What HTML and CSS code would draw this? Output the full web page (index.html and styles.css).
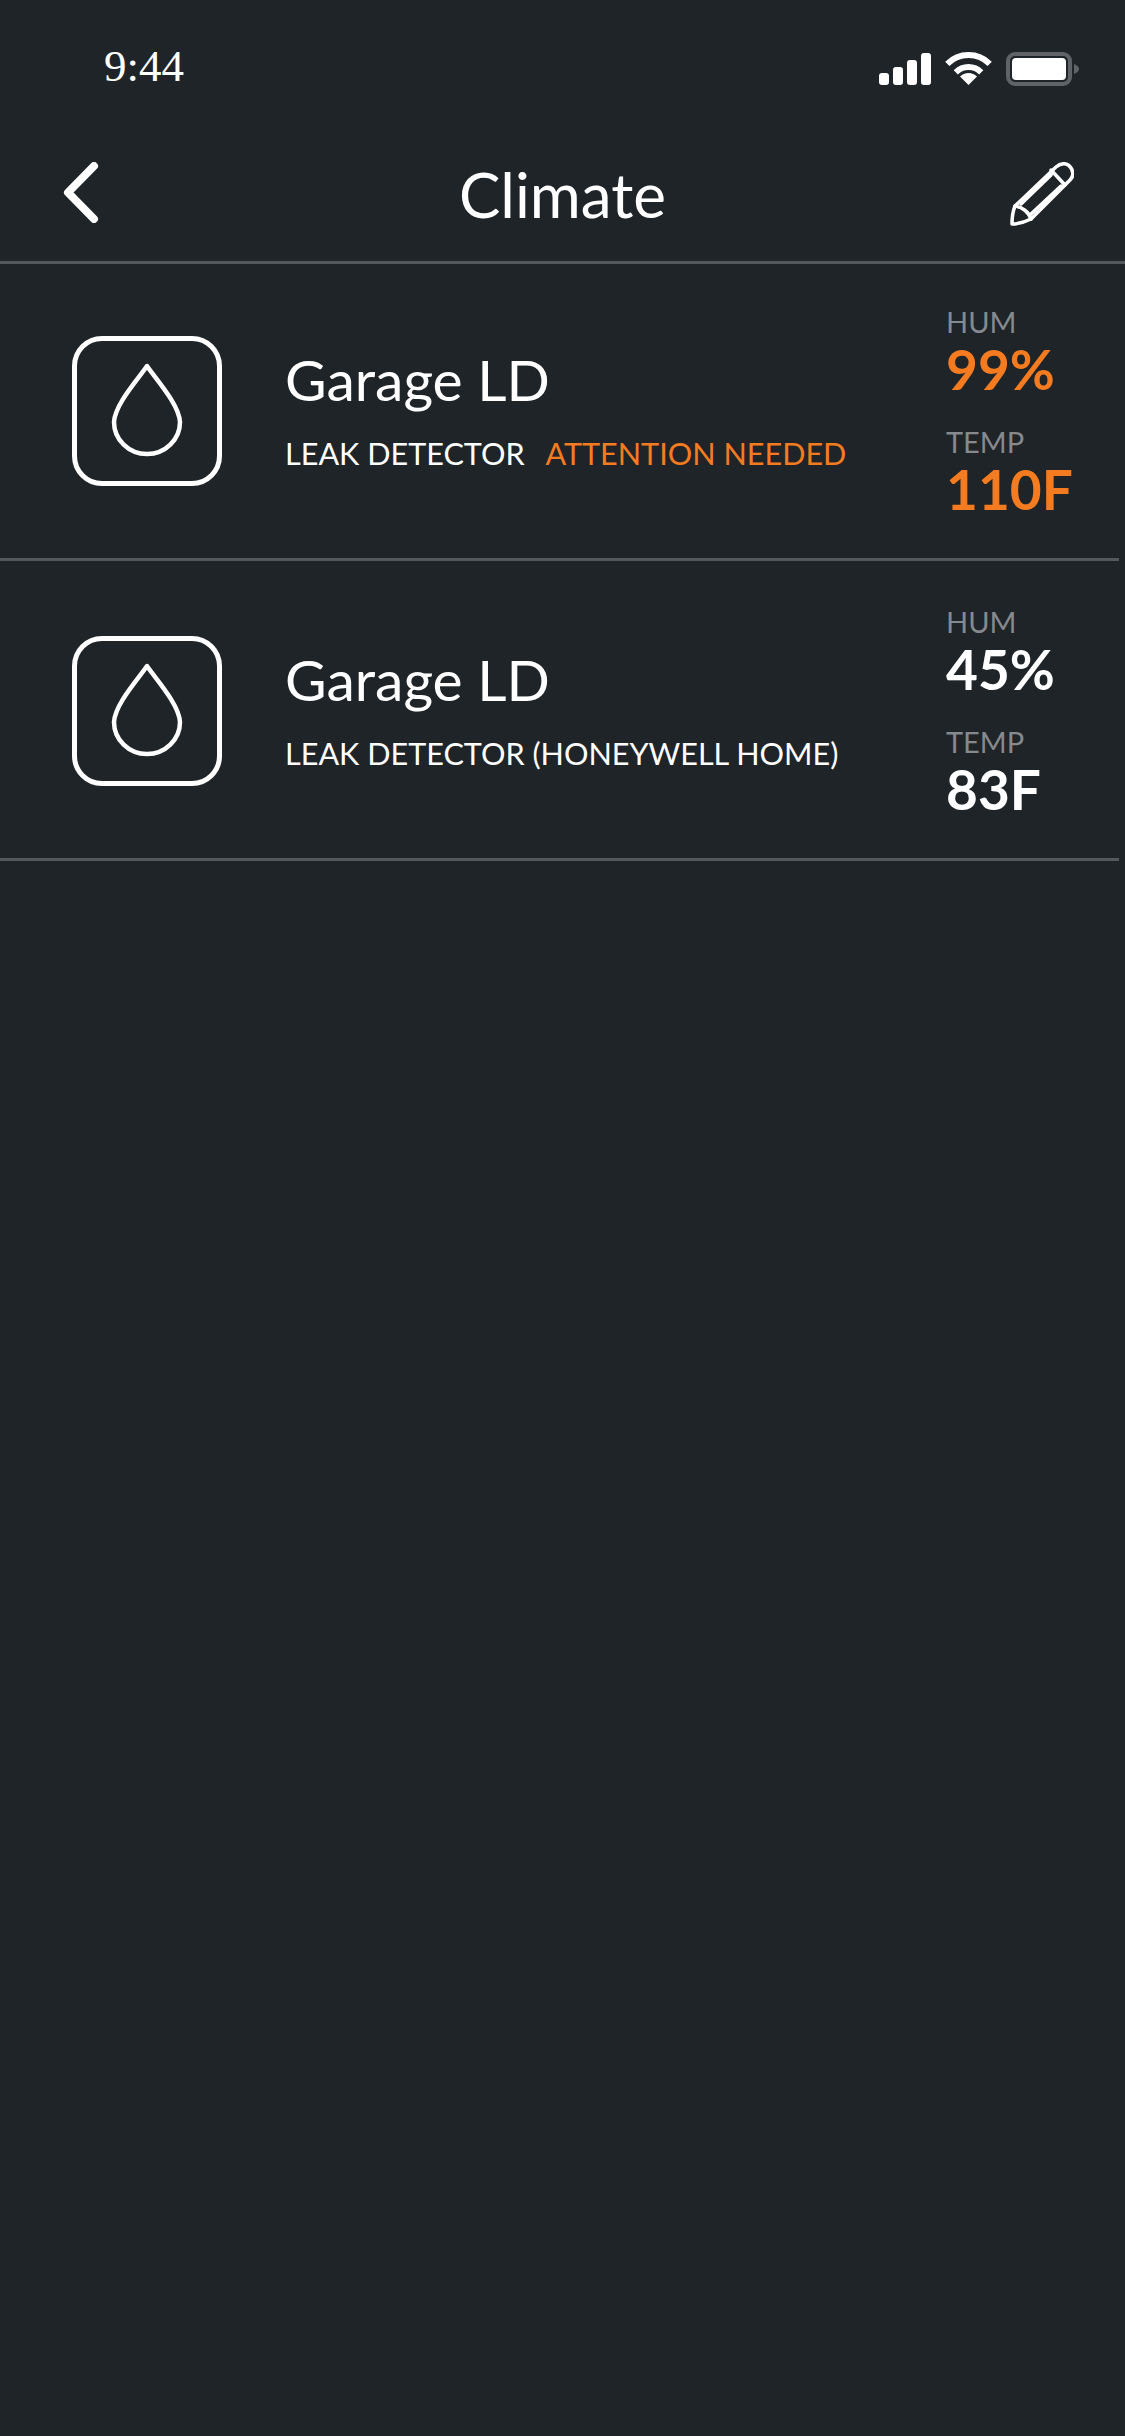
FILE: index.html
```html
<!DOCTYPE html>
<html lang="en">
<head>
    <meta charset="UTF-8">
    <meta name="viewport" content="width=device-width, initial-scale=1.0">
    <title>Climate</title>
    <link rel="stylesheet" href="styles.css">
</head>
<body>
<div class="status-bar">
    <span class="clock">9:44</span>
    <div class="status-icons">
        <svg class="signal" width="52" height="32" viewBox="0 0 52 32" fill="#fff">
            <rect x="0" y="20" width="10" height="12" rx="3"/>
            <rect x="14" y="14" width="10" height="18" rx="3"/>
            <rect x="28" y="7" width="10" height="25" rx="3"/>
            <rect x="42" y="0" width="10" height="32" rx="3"/>
        </svg>
        <svg class="wifi" width="47" height="33" viewBox="0 0 47 33" fill="none" stroke="#fff" stroke-width="6">
            <path d="M2.3 11.8A30 30 0 0 1 44.7 11.8"/>
            <path d="M10.8 20.3A18 18 0 0 1 36.2 20.3"/>
            <path d="M23.5 33L15 24.5A12 12 0 0 1 32 24.5Z" fill="#fff" stroke="none"/>
        </svg>
        <svg class="battery" width="73" height="34" viewBox="0 0 73 34">
            <rect x="2" y="2" width="62" height="30" rx="7" fill="none" stroke="#5f6367" stroke-width="4"/>
            <rect x="6" y="6" width="54" height="22" rx="4" fill="#fff"/>
            <path d="M68 12C71 13 73 15 73 17C73 19 71 21 68 22Z" fill="#5f6367"/>
        </svg>
    </div>
</div>

<header class="nav">
    <svg class="back" width="36" height="61" viewBox="0 0 36 61" fill="none" stroke="#fff" stroke-width="8" stroke-linecap="round" stroke-linejoin="round">
        <path d="M31 4L5 30.500L31 57"/>
    </svg>
    <h1 class="nav-title">Climate</h1>
    <svg class="edit" width="64" height="64" viewBox="0 0 64 64" fill="none" stroke="#fff" stroke-width="3.500" stroke-linejoin="round" stroke-linecap="round">
        <path d="M5 44L46 5C52 0 58 1 61 6C64 11 63 15 60 18L21 57C15 60 8 62 2 62C2 55 3 49 5 44Z"/>
        <path d="M5 44C12 45 19 50 21 57"/>
        <path d="M11 42L41 13M21 52L51 24M41 8L55 23"/>
    </svg>
</header>

<main class="device-list">
    <div class="device-row">
        <div class="device-icon">
            <svg class="drop" width="72" height="94" viewBox="0 0 72 94" fill="none" stroke="#fff" stroke-width="4.500" stroke-linejoin="round">
                <path d="M36 3C28 15 4 41 3 59A33 32 0 0 0 69 59C68 41 44 15 36 3Z"/>
            </svg>
        </div>
        <div class="device-info">
            <div class="device-name">Garage LD</div>
            <div class="device-type">LEAK DETECTOR <span class="alert">ATTENTION NEEDED</span></div>
        </div>
        <div class="readings">
            <div class="reading-label">HUM</div>
            <div class="reading-value alert">99%</div>
            <div class="reading-label temp">TEMP</div>
            <div class="reading-value alert">110F</div>
        </div>
    </div>
    <div class="device-row">
        <div class="device-icon">
            <svg class="drop" width="72" height="94" viewBox="0 0 72 94" fill="none" stroke="#fff" stroke-width="4.500" stroke-linejoin="round">
                <path d="M36 3C28 15 4 41 3 59A33 32 0 0 0 69 59C68 41 44 15 36 3Z"/>
            </svg>
        </div>
        <div class="device-info">
            <div class="device-name">Garage LD</div>
            <div class="device-type">LEAK DETECTOR (HONEYWELL HOME)</div>
        </div>
        <div class="readings">
            <div class="reading-label">HUM</div>
            <div class="reading-value">45%</div>
            <div class="reading-label temp">TEMP</div>
            <div class="reading-value">83F</div>
        </div>
    </div>
</main>
</body>
</html>
```
FILE: styles.css
```css
html, body {
    margin: 0;
    padding: 0;
}
body {
    width: 1125px;
    min-height: 2436px;
    background-color: #1f2428;
    color: #fff;
    font-family: Lato, "Open Sans", sans-serif;
}
.status-bar {
    height: 130px;
    box-sizing: border-box;
    padding: 49px 46px 0 104px;
    display: flex;
    justify-content: space-between;
    align-items: flex-start;
}
.clock {
    font-family: "Liberation Serif", serif;
    font-size: 45px;
    line-height: 34px;
}
.status-icons {
    margin-top: 3px;
    display: flex;
    align-items: flex-start;
    gap: 14px;
}
.signal {
    margin-top: 1px;
}
.nav {
    height: 134px;
    box-sizing: border-box;
    padding-top: 32px;
    border-bottom: 3px solid #54575b;
    display: grid;
    grid-template-columns: 1fr auto 1fr;
    align-items: start;
}
.back {
    margin-left: 63px;
}
.edit {
    justify-self: end;
    margin-right: 51px;
}
.nav-title {
    margin: 0;
    font-size: 62px;
    font-weight: 400;
    line-height: 64px;
}
.device-list {
    width: 1119px;
}
.device-row {
    padding: 72px 0;
    border-bottom: 3px solid #54575b;
    display: flex;
    align-items: center;
}
.device-row + .device-row {
    padding-top: 75px;
}
.device-icon {
    width: 150px;
    height: 150px;
    box-sizing: border-box;
    margin-left: 72px;
    border: 5px solid #fff;
    border-radius: 30px;
    display: flex;
    justify-content: center;
    align-items: center;
}
.drop {
    margin-bottom: 3px;
}
.device-info {
    flex: 1;
    margin-left: 63px;
    padding-bottom: 3px;
}
.device-name {
    font-size: 57px;
    line-height: 64px;
}
.device-type {
    margin-top: 25px;
    font-size: 30.600px;
    line-height: 36px;
    white-space: pre-wrap;
}
.device-type .alert {
    margin-left: 13px;
}
.alert {
    color: #f47b20;
}
.readings {
    width: 173px;
    height: 150px;
}
.reading-label {
    margin-top: -32px;
    font-size: 29px;
    line-height: 36px;
    color: #86898d;
}
.reading-label.temp {
    margin-top: 28px;
}
.reading-value {
    margin-top: 2px;
    font-size: 55px;
    font-weight: 700;
    line-height: 54px;
}
```
